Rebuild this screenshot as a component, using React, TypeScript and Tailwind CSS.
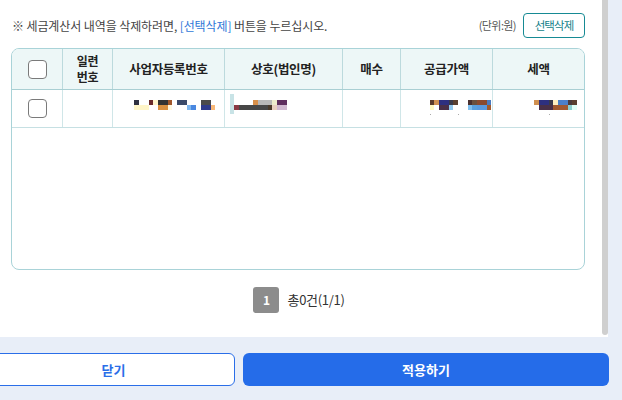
import React from 'react'

type Run = [number, string]

const bizNo: Run[][] = [
  [[5, '#2f3140'], [10, '#fff'], [4, '#6b2b2b'], [5, '#fff6cc'], [10, '#333333'], [4, '#a0562a'], [5, '#fff'], [10, '#3a4a6a'], [14, '#fff'], [10, '#4a4a4a'], [4, '#fff']],
  [[15, '#fff5c8'], [9, '#fff'], [10, '#d99040'], [4, '#fff8e0'], [15, '#fff'], [4, '#80b8f0'], [5, '#4a88e0'], [5, '#fff'], [10, '#2e3a8a'], [4, '#f8b878']],
]

const corpName: Run[][] = [
  [[19, '#fff'], [5, '#d9904a'], [14, '#b8b8b8'], [5, '#ecebcc'], [10, '#5e2e5e']],
  [[5, '#8a3a44'], [29, '#474747'], [4, '#4a3a2a'], [5, '#e8d0c0'], [10, '#d0b8d0']],
]

const supply: Run[][] = [
  [[4, '#5a3a2a'], [5, '#d09050'], [10, '#2e3080'], [4, '#3a3a4a'], [5, '#5a4030'], [10, '#fff'], [4, '#4a3030'], [5, '#6a5040'], [10, '#8a4a30'], [4, '#4a7ac0']],
  [[4, '#fff8c0'], [5, '#fff'], [10, '#4a3048'], [4, '#90c8f0'], [5, '#fff'], [10, '#fff'], [4, '#80c0f0'], [5, '#5aa0e0'], [10, '#5a9ae0'], [4, '#a05a30']],
]

const tax: Run[][] = [
  [[5, '#d09050'], [10, '#2e3080'], [4, '#3a3a4a'], [5, '#fff0c0'], [10, '#4a80c8'], [4, '#4a3a3a'], [5, '#5a4030']],
  [[5, '#fff'], [10, '#4a3048'], [4, '#4a3048'], [15, '#a05a30'], [4, '#8ad0d0'], [5, '#e0fff8']],
]

function Mosaic({ rows }: { rows: Run[][] }) {
  return (
    <div className="flex flex-col">
      {rows.map((r, i) => (
        <div key={i} className="flex h-[5px]">
          {r.map(([w, c], j) => (
            <span key={j} className="h-[5px]" style={{ width: w, background: c }} />
          ))}
        </div>
      ))}
    </div>
  )
}

function Box() {
  return <span className="block w-[19px] h-[19px] rounded-[4px] border border-[#7a7a7a] bg-white" />
}

const cols = ['w-[50px]', 'w-[50px]', 'w-[112px]', 'w-[118px]', 'w-[58px]', 'w-[92px]', 'w-[92px]']

export default function App() {
  return (
    <div
      className="w-[622px] h-[400px] overflow-hidden bg-[#e8eef8] text-[#333]"
      style={{ fontFamily: '"Noto Sans CJK KR", "Noto Sans", sans-serif' }}
    >
      <div className="flex h-[337px]">
        <div className="w-[602px] bg-white flex flex-col pt-[13px] pl-[11px] pr-[17px]">
          <div className="flex items-center h-[25px]">
            <p className="pl-px text-[12px] tracking-[-0.1px] text-[#444]">
              ※ 세금계산서 내역을 삭제하려면, <span className="text-[#2f78d8]">[선택삭제]</span> 버튼을 누르십시오.
            </p>
            <span className="ml-auto text-[11px] tracking-[-0.6px] text-[#555]">(단위:원)</span>
            <button className="ml-[7px] h-[25px] w-[62px] rounded-[4px] border border-[#168a94] bg-white text-[11.5px] tracking-[-0.9px] text-[#137f8a]">
              선택삭제
            </button>
          </div>

          <div className="mt-[10px] h-[222px] rounded-[8px] border border-[#a9d3d8] overflow-hidden">
            <div className="flex h-[41px] bg-[#edf7f7] border-b border-[#a9cfd3] text-[12.5px] font-semibold tracking-[-0.3px] text-[#222]">
              <div className={`${cols[0]} flex items-center justify-center`}><Box /></div>
              <div className={`${cols[1]} flex flex-col items-center justify-center text-[12px] border-l border-[#bcdadd]`}>
                <span className="leading-[16px]">일련</span>
                <span className="leading-[16px]">번호</span>
              </div>
              <div className={`${cols[2]} flex items-center justify-center border-l border-[#bcdadd]`}>사업자등록번호</div>
              <div className={`${cols[3]} flex items-center justify-center border-l border-[#bcdadd]`}>상호(법인명)</div>
              <div className={`${cols[4]} flex items-center justify-center border-l border-[#bcdadd]`}>매수</div>
              <div className={`${cols[5]} flex items-center justify-center border-l border-[#bcdadd]`}>공급가액</div>
              <div className={`${cols[6]} flex items-center justify-center border-l border-[#bcdadd]`}>세액</div>
            </div>
            <div className="flex h-[38px] border-b border-[#c6e0e3]">
              <div className={`${cols[0]} flex items-center justify-center`}><Box /></div>
              <div className={`${cols[1]} border-l border-[#d0e6e8]`} />
              <div className={`${cols[2]} border-l border-[#d0e6e8] flex items-start pt-[10px] pl-[21px]`}>
                <Mosaic rows={bizNo} />
              </div>
              <div className={`${cols[3]} border-l border-[#d0e6e8] flex items-start pt-[4px] pl-[5px]`}>
                <span className="w-[4px] h-[20px] bg-[#c8e3e6]" />
                <div className="pt-[6px]"><Mosaic rows={corpName} /></div>
              </div>
              <div className={`${cols[4]} border-l border-[#d0e6e8]`} />
              <div className={`${cols[5]} border-l border-[#d0e6e8] flex flex-col pt-[10px] pl-[29px]`}>
                <Mosaic rows={supply} />
                <div className="flex gap-[27px] mt-[4px]">
                  <span className="w-px h-px bg-[#aaa]" />
                  <span className="w-px h-px bg-[#aaa]" />
                </div>
              </div>
              <div className={`${cols[6]} border-l border-[#d0e6e8] flex flex-col pt-[10px] pl-[41px]`}>
                <Mosaic rows={tax} />
                <span className="ml-[15px] mt-[4px] w-px h-px bg-[#aaa]" />
              </div>
            </div>
          </div>

          <div className="mt-[17px] flex items-center justify-center gap-[8px] pl-[2px]">
            <span className="w-[26px] h-[26px] rounded-[3px] bg-[#8c8c8c] text-white text-[12px] font-bold flex items-center justify-center">1</span>
            <span className="text-[13px] tracking-[-0.3px] text-[#333]">총0건(1/1)</span>
          </div>
        </div>
        <div className="w-[6px] bg-white">
          <div className="w-[6px] h-[335px] bg-[#cfcfcf] rounded-b-[3px]" />
        </div>
      </div>

      <div className="flex gap-[8px] pt-[16px]">
        <button className="ml-[-8px] w-[243px] h-[33px] rounded-[6px] border border-[#2a6ee8] bg-white text-[13px] font-semibold text-[#2a6ee8]">
          닫기
        </button>
        <button className="w-[366px] h-[33px] rounded-[6px] bg-[#256ce9] text-[13px] font-semibold text-white">
          적용하기
        </button>
      </div>
    </div>
  )
}
